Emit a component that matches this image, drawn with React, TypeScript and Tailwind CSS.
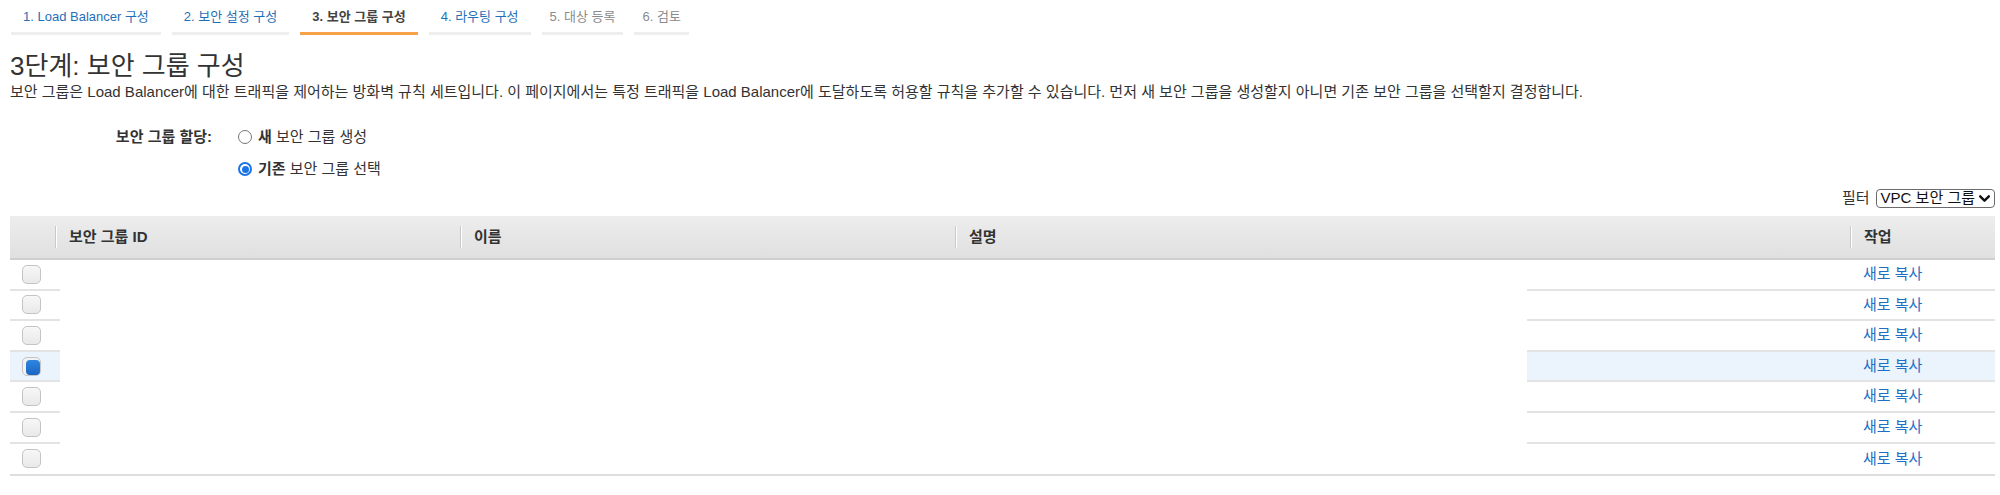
import clsx from 'clsx';

const STEPS = [
    { id: 1, label: '1. Load Balancer 구성', state: 'done' },
    { id: 2, label: '2. 보안 설정 구성', state: 'done' },
    { id: 3, label: '3. 보안 그룹 구성', state: 'active' },
    { id: 4, label: '4. 라우팅 구성', state: 'done' },
    { id: 5, label: '5. 대상 등록', state: 'todo' },
    { id: 6, label: '6. 검토', state: 'todo' },
];

const ROWS = [
    { id: 1, checked: false },
    { id: 2, checked: false },
    { id: 3, checked: false },
    { id: 4, checked: true },
    { id: 5, checked: false },
    { id: 6, checked: false },
    { id: 7, checked: false },
];

const FONT = "font-['Liberation_Sans','Noto_Sans_CJK_KR',sans-serif]";

const Checkbox = ({ checked }: { checked: boolean }) => (
    checked ? (
        <div className="w-[19px] h-[19px] rounded-[5px] border border-[#c4c4c4] bg-[#f2f2f2] relative">
            <div className="absolute left-[3px] top-[2px] w-[14px] h-[15px] rounded-[4px] bg-gradient-to-b from-[#2f86e0] to-[#1a66c2]"></div>
        </div>
    ) : (
        <div className="w-[19px] h-[19px] rounded-[5px] border border-[#c4c4c4] bg-gradient-to-b from-[#f7f7f7] to-[#e9e9e9]"></div>
    )
);

const Radio = ({ checked }: { checked: boolean }) => (
    checked ? (
        <div className="w-[14px] h-[14px] rounded-full bg-[#1a73e8] flex items-center justify-center">
            <div className="w-[10px] h-[10px] rounded-full bg-white flex items-center justify-center">
                <div className="w-[7px] h-[7px] rounded-full bg-[#1a73e8]"></div>
            </div>
        </div>
    ) : (
        <div className="w-[14px] h-[14px] rounded-full border border-[#777] bg-white"></div>
    )
);

const HeaderCell = ({ label, className, sep = true }: { label?: string, className?: string, sep?: boolean }) => (
    <div className={clsx("flex items-center h-full", className)}>
        {sep && <div className="w-px h-[22px] bg-[#c9c9c9] border-r border-white box-content"></div>}
        {label && <span className="pl-3 font-bold text-[15px] text-[#333]">{label}</span>}
    </div>
);

export default function App() {
    return (
        <div className={clsx("w-[2000px] h-[495px] bg-white text-[#333] pl-[10px] pr-[5px] overflow-hidden", FONT)}>

            {/* Wizard steps */}
            <div className="flex gap-[11px] pt-[7px] ml-px">
                {STEPS.map((s) => (
                    <div
                        key={s.id}
                        className={clsx(
                            "pb-[5px] leading-5 text-[13px] border-b-[3px]",
                            s.id >= 5 ? 'px-2' : 'px-3',
                            s.state === 'active' ? 'border-[#f7a148] text-[#444] font-bold' : 'border-[#eeeeee]',
                            s.state === 'done' && 'text-[#1f6fb8]',
                            s.state === 'todo' && 'text-[#8a8a8a]'
                        )}
                    >
                        {s.label}
                    </div>
                ))}
            </div>

            {/* Title */}
            <h1 className="mt-[15px] text-[26px] leading-[32px] text-[#333] font-normal">3단계: 보안 그룹 구성</h1>
            <p className="text-[15px] leading-5 text-[#333]">
                보안 그룹은 Load Balancer에 대한 트래픽을 제어하는 방화벽 규칙 세트입니다. 이 페이지에서는 특정 트래픽을 Load Balancer에 도달하도록 허용할 규칙을 추가할 수 있습니다. 먼저 새 보안 그룹을 생성할지 아니면 기존 보안 그룹을 선택할지 결정합니다.
            </p>

            {/* Assignment */}
            <div className="mt-[25px] flex flex-col gap-3 text-[15px] leading-5">
                <div className="flex items-center">
                    <div className="w-[202px] text-right font-bold">보안 그룹 할당:</div>
                    <div className="ml-[26px] flex items-center gap-[6px]">
                        <Radio checked={false} />
                        <span><b>새</b> 보안 그룹 생성</span>
                    </div>
                </div>
                <div className="flex items-center">
                    <div className="w-[202px]"></div>
                    <div className="ml-[26px] flex items-center gap-[6px]">
                        <Radio checked={true} />
                        <span><b>기존</b> 보안 그룹 선택</span>
                    </div>
                </div>
            </div>

            {/* Filter */}
            <div className="mt-[9px] flex justify-end items-center gap-[6px] text-[15px] leading-5">
                <span className="text-[#333]">필터</span>
                <div className="h-[19px] flex items-center gap-[3px] border border-[#6b6b6b] rounded-[4px] pl-[4px] pr-[3px] text-[#111]">
                    <span className="leading-4">VPC 보안 그룹</span>
                    <svg width="13" height="13" viewBox="0 0 12 12" fill="none">
                        <path d="M2 4l4 4 4-4" stroke="#111" strokeWidth="2.2" strokeLinecap="round" strokeLinejoin="round" />
                    </svg>
                </div>
            </div>

            {/* Table */}
            <div className="mt-2 border-b-2 border-[#dedede]">
                <div className="h-[44px] flex bg-gradient-to-b from-[#ededed] to-[#e0e0e0] border-b-2 border-[#cfcfcf]">
                    <HeaderCell sep={false} className="w-[45px]" />
                    <HeaderCell label="보안 그룹 ID" className="w-[405px]" />
                    <HeaderCell label="이름" className="w-[495px]" />
                    <HeaderCell label="설명" className="w-[895px]" />
                    <HeaderCell label="작업" className="flex-1" />
                </div>
                {ROWS.map((r, i) => {
                    const last = i === ROWS.length - 1;
                    return (
                        <div key={r.id} className="flex h-[30.6px]">
                            <div className={clsx(
                                "w-[50px] flex items-center pl-3",
                                !last && 'border-b-2 border-[#e3e3e3]',
                                r.checked && 'bg-[#ebf3fd]'
                            )}>
                                <Checkbox checked={r.checked} />
                            </div>
                            <div className="flex-1"></div>
                            <div className={clsx(
                                "w-[468px] flex items-center pl-[336px] text-[15px] text-[#1f6fc4]",
                                !last && 'border-b-2 border-[#e3e3e3]',
                                r.checked && 'bg-[#ebf3fd]'
                            )}>
                                새로 복사
                            </div>
                        </div>
                    );
                })}
            </div>
        </div>
    );
}
